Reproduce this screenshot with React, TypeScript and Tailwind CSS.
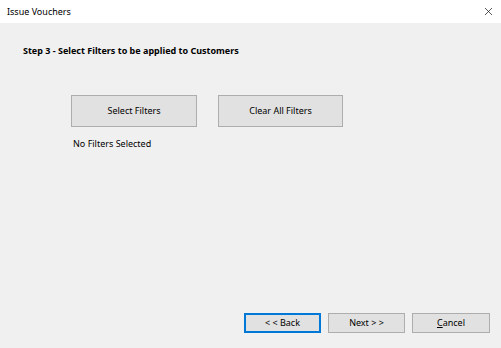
import { X } from "lucide-react";

const btn =
  "flex items-center justify-center bg-[#e1e1e1] text-[9px] text-black";

export default function App() {
  return (
    <div
      className="w-[501px] h-[348px] flex flex-col bg-[#f0f0f0] overflow-hidden"
      style={{ fontFamily: '"Noto Sans", "Open Sans", sans-serif' }}
    >
      {/* Title bar */}
      <div className="h-[23px] bg-white flex items-center justify-between pl-[7px] pr-[6px] shrink-0">
        <span className="text-[9px] text-black leading-[12px]">Issue Vouchers</span>
        <X size={13} strokeWidth={1.2} className="text-black" />
      </div>

      {/* Body */}
      <div className="flex-1 flex flex-col">
        <h2 className="mt-[22px] ml-[23px] text-[9px] font-bold text-black leading-[12px]">
          Step 3 - Select Filters to be applied to Customers
        </h2>

        <div className="mt-[38px] ml-[71px] flex gap-[21px]">
          <button className={`${btn} border border-[#adadad] w-[126px] h-[32px]`}>Select Filters</button>
          <button className={`${btn} border border-[#adadad] w-[125px] h-[32px]`}>Clear All Filters</button>
        </div>

        <p className="mt-[11px] ml-[73px] text-[9px] text-black leading-[12px]">No Filters Selected</p>

        <div className="mt-auto mb-[15px] mr-[11px] flex justify-end gap-[7px]">
          <button className={`${btn} border-2 border-[#0078d7] w-[77px] h-[20px]`}>&lt; &lt; Back</button>
          <button className={`${btn} border border-[#adadad] w-[77px] h-[20px]`}>Next &gt; &gt;</button>
          <button className={`${btn} border border-[#adadad] w-[78px] h-[20px]`}>
            <span>
              <span className="underline">C</span>ancel
            </span>
          </button>
        </div>
      </div>
    </div>
  );
}
